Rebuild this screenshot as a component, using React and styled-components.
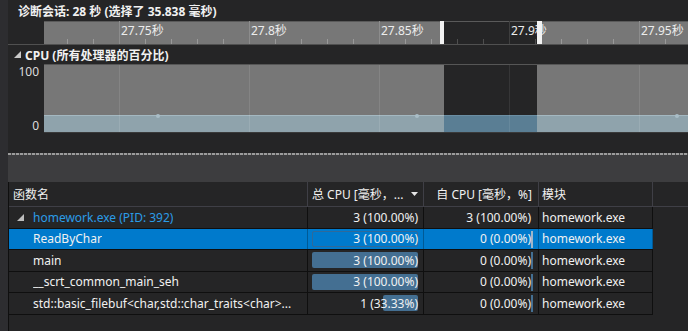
import React from 'react';
import styled, { createGlobalStyle } from 'styled-components';

const Global = createGlobalStyle`
  html, body { margin: 0; padding: 0; background: #252526; }
  body {
    font-family: "Noto Sans", "Noto Sans CJK SC", sans-serif;
    font-size: 12px;
    color: #f1f1f1;
  }
  #root { width: 688px; height: 331px; overflow: hidden; }
`;

const Root = styled.div`
  display: flex;
  width: 688px;
  height: 331px;
  overflow: hidden;
  background: #252526;
`;

const Side = styled.div`
  width: 8px;
  flex: none;
  background: #2d2d30;
`;

const Main = styled.div`
  flex: 1;
  min-width: 0;
  display: flex;
  flex-direction: column;
`;

const TitleBar = styled.div`
  height: 21px;
  flex: none;
  display: flex;
  align-items: center;
  padding-left: 10px;
  padding-top: 1px;
  box-sizing: border-box;
  font-weight: 700;
  white-space: nowrap;
  color: #f1f1f1;
`;

const RulerRow = styled.div`
  display: flex;
  height: 23px;
  flex: none;
`;

const Gutter = styled.div`
  width: 36px;
  flex: none;
  display: flex;
  flex-direction: column;
  justify-content: space-between;
  align-items: flex-end;
  padding: ${(p) => (p.$axis ? '1px 5px 0 0' : '0')};
  box-sizing: border-box;
  color: #dcdcdc;
  line-height: 14px;
`;

const Canvas = styled.svg`
  display: block;
  flex: 1;
  height: 100%;
`;

const SectionHeader = styled.div`
  height: 20px;
  flex: none;
  box-sizing: border-box;
  border-top: 1px solid #505050;
  display: flex;
  align-items: center;
  padding-left: 6px;
  gap: 4px;
  font-weight: 700;
  white-space: nowrap;
`;

const ChartRow = styled.div`
  display: flex;
  height: 69px;
  flex: none;
`;

const Spacer = styled.div`
  height: 20px;
  flex: none;
`;

const Splitter = styled.div`
  height: 2px;
  flex: none;
  background: repeating-linear-gradient(90deg, #9c9c9c 0 3px, #4a4a4a 3px 4px);
`;

const Toolbar = styled.div`
  height: 27px;
  flex: none;
  background: #3d3d3f;
`;

const TableWrap = styled.div`
  flex: 1;
  display: flex;
  flex-direction: column;
  border-left: 1px solid #0f0f0f;
`;

const HeaderRow = styled.div`
  display: grid;
  grid-template-columns: 299px 116px 115px 114px 1fr;
  height: 25px;
  box-sizing: border-box;
  border-bottom: 1px solid #3f3f46;
  flex: none;
`;

const HeaderCell = styled.div`
  display: flex;
  align-items: center;
  justify-content: ${(p) => p.$justify || 'flex-start'};
  padding: ${(p) => p.$pad || '0'};
  border-right: ${(p) => (p.$last ? 'none' : '1px solid #3f3f46')};
  white-space: nowrap;
  overflow: hidden;
  color: #f1f1f1;
`;

const Row = styled.div`
  display: grid;
  grid-template-columns: 299px 116px 115px 114px;
  width: 644px;
  height: 21.5px;
  box-sizing: border-box;
  border-bottom: 1px solid #0f0f0f;
  background: ${(p) => (p.$selected ? '#007acc' : 'transparent')};
  flex: none;
`;

const Cell = styled.div`
  position: relative;
  display: flex;
  align-items: center;
  justify-content: ${(p) => (p.$right ? 'flex-end' : 'flex-start')};
  padding: ${(p) => p.$pad || '0'};
  border-right: 1px solid ${(p) => (p.$selected ? '#005a96' : '#0f0f0f')};
  white-space: nowrap;
  overflow: hidden;
  min-width: 0;
`;

const NameText = styled.span`
  color: ${(p) => (p.$root ? '#2b9ce6' : '#f1f1f1')};
  overflow: hidden;
  text-overflow: ellipsis;
  white-space: nowrap;
`;

const Value = styled.span`
  position: relative;
  z-index: 1;
`;

const Bar = styled.div`
  position: absolute;
  top: 2px;
  right: 5px;
  height: 16px;
  box-sizing: border-box;
  border-radius: 2px;
  background: ${(p) => (p.$selected ? 'transparent' : '#446f92')};
  border: ${(p) => (p.$selected ? '1px solid #2f6a9a' : 'none')};
`;

const Thin = styled.div`
  position: absolute;
  top: 2px;
  right: 5px;
  width: 2px;
  height: 17px;
  background: ${(p) => (p.$selected ? '#9fb6c9' : '#446f92')};
`;

const Expander = ({ color = '#c8c8c8' }) => (
  <svg width="7" height="7" viewBox="0 0 7 7" style={{ flex: 'none' }}>
    <polygon points="7,0 7,7 0,7" fill={color} />
  </svg>
);

const SortArrow = () => (
  <svg width="7" height="4" viewBox="0 0 7 4">
    <polygon points="0,0 7,0 3.5,4" fill="#e6e6e6" />
  </svg>
);

const W = 644;
const majors = [75, 205, 335, 465, 595];
const labels = ['27.75秒', '27.8秒', '27.85秒', '27.9秒', '27.95秒'];
const SEL = [400, 493];
const inSel = (x) => x >= SEL[0] && x <= SEL[1];
const minors = [];
for (let x = 23; x < W; x += 26) if (!majors.includes(x)) minors.push(x);

const Ruler = () => (
  <Canvas viewBox={`0 0 ${W} 23`} preserveAspectRatio="none">
    <rect x="0" y="0" width={W} height="23" fill="#777777" />
    <rect x={SEL[0]} y="0" width={SEL[1] - SEL[0]} height="23" fill="#252526" />
    <line x1="0" x2={W} y1="0.5" y2="0.5" stroke="#5a5a5a" />
    {majors.map((x) => (
      <line key={x} x1={x + 0.5} x2={x + 0.5} y1="0" y2="23" stroke={inSel(x) ? '#3e3e3e' : '#8c8c8c'} />
    ))}
    {minors.map((x) => (
      <line key={x} x1={x + 0.5} x2={x + 0.5} y1="18" y2="23" stroke={inSel(x) ? '#4e4e4e' : '#999999'} />
    ))}
    {majors.map((x, i) => (
      <text
        key={x}
        x={x + 2}
        y="14"
        fill="#ececec"
        fontSize="12"
        fontFamily='"Noto Sans", "Noto Sans CJK SC", sans-serif'
      >
        {labels[i]}
      </text>
    ))}
    <rect x="396" y="0" width="4" height="23" fill="#f2f2f2" />
    <rect x="493" y="0" width="5" height="23" fill="#f2f2f2" />
  </Canvas>
);

const Chart = () => (
  <Canvas viewBox={`0 0 ${W} 69`} preserveAspectRatio="none">
    <rect x="0" y="0" width={W} height="69" fill="#777777" />
    <line x1="0" x2={W} y1="0.5" y2="0.5" stroke="#565656" />
    <rect x={SEL[0]} y="1" width={SEL[1] - SEL[0]} height="50" fill="#252526" />
    <rect x="0" y="51" width={W} height="18" fill="#8fa3ac" />
    <rect x={SEL[0]} y="51" width={SEL[1] - SEL[0]} height="18" fill="#5a7e94" />
    <line x1="0" x2={SEL[0]} y1="51.5" y2="51.5" stroke="#a4b8c1" />
    <line x1={SEL[1]} x2={W} y1="51.5" y2="51.5" stroke="#a4b8c1" />
    <line x1={SEL[0]} x2={SEL[1]} y1="51.5" y2="51.5" stroke="#6b8ea3" />
    {majors.map((x) => (
      <line
        key={x}
        x1={x + 0.5}
        x2={x + 0.5}
        y1="1"
        y2="69"
        stroke={inSel(x) ? 'rgba(255,255,255,0.08)' : 'rgba(255,255,255,0.1)'}
      />
    ))}
    {[114, 373, 633].map((x) => (
      <circle key={x} cx={x} cy="52" r="2" fill="#a9bdc7" />
    ))}
    <line x1="0" x2={W} y1="68.5" y2="68.5" stroke="#3a3a3a" />
  </Canvas>
);

const rows = [
  { name: 'homework.exe (PID: 392)', root: true, total: '3 (100.00%)', self: '3 (100.00%)', mod: 'homework.exe' },
  { name: 'ReadByChar', selected: true, total: '3 (100.00%)', totalPct: 1, self: '0 (0.00%)', selfPct: 0, mod: 'homework.exe' },
  { name: 'main', total: '3 (100.00%)', totalPct: 1, self: '0 (0.00%)', selfPct: 0, mod: 'homework.exe' },
  { name: '__scrt_common_main_seh', total: '3 (100.00%)', totalPct: 1, self: '0 (0.00%)', selfPct: 0, mod: 'homework.exe' },
  {
    name: 'std::basic_filebuf<char,std::char_traits<char>...',
    total: '1 (33.33%)',
    totalPct: 1 / 3,
    self: '0 (0.00%)',
    selfPct: 0,
    mod: 'homework.exe',
  },
];

const BAR_W = 106;

export default function App() {
  return (
    <>
      <Global />
      <Root>
        <Side />
        <Main>
          <TitleBar>诊断会话: 28 秒 (选择了 35.838 毫秒)</TitleBar>
          <RulerRow>
            <Gutter />
            <Ruler />
          </RulerRow>
          <SectionHeader>
            <Expander />
            <span>CPU (所有处理器的百分比)</span>
          </SectionHeader>
          <ChartRow>
            <Gutter $axis>
              <span>100</span>
              <span>0</span>
            </Gutter>
            <Chart />
          </ChartRow>
          <Spacer />
          <Splitter />
          <Toolbar />
          <TableWrap>
            <HeaderRow>
              <HeaderCell $pad="0 0 0 4px">函数名</HeaderCell>
              <HeaderCell $pad="0 5px 0 4px" $justify="space-between">
                <span>总 CPU [毫秒，...</span>
                <SortArrow />
              </HeaderCell>
              <HeaderCell $pad="0 6px 0 0" $justify="flex-end">
                自 CPU [毫秒，%]
              </HeaderCell>
              <HeaderCell $pad="0 0 0 3px">模块</HeaderCell>
              <HeaderCell $last />
            </HeaderRow>
            {rows.map((r) => (
              <Row key={r.name} $selected={r.selected}>
                <Cell $selected={r.selected} $pad={r.root ? '0 4px 0 8px' : '0 4px 0 24px'}>
                  {r.root && (
                    <>
                      <Expander color="#bdbdbd" />
                      <span style={{ width: 9, flex: 'none' }} />
                    </>
                  )}
                  <NameText $root={r.root}>{r.name}</NameText>
                </Cell>
                <Cell $selected={r.selected} $right $pad="0 5px 0 0">
                  {r.totalPct != null && (
                    <Bar $selected={r.selected} style={{ width: Math.max(2, BAR_W * r.totalPct) }} />
                  )}
                  <Value>{r.total}</Value>
                </Cell>
                <Cell $selected={r.selected} $right $pad="0 7px 0 0">
                  {r.selfPct != null && <Thin $selected={r.selected} />}
                  <Value>{r.self}</Value>
                </Cell>
                <Cell $selected={r.selected} $pad="0 0 0 3px">
                  {r.mod}
                </Cell>
              </Row>
            ))}
          </TableWrap>
        </Main>
      </Root>
    </>
  );
}
